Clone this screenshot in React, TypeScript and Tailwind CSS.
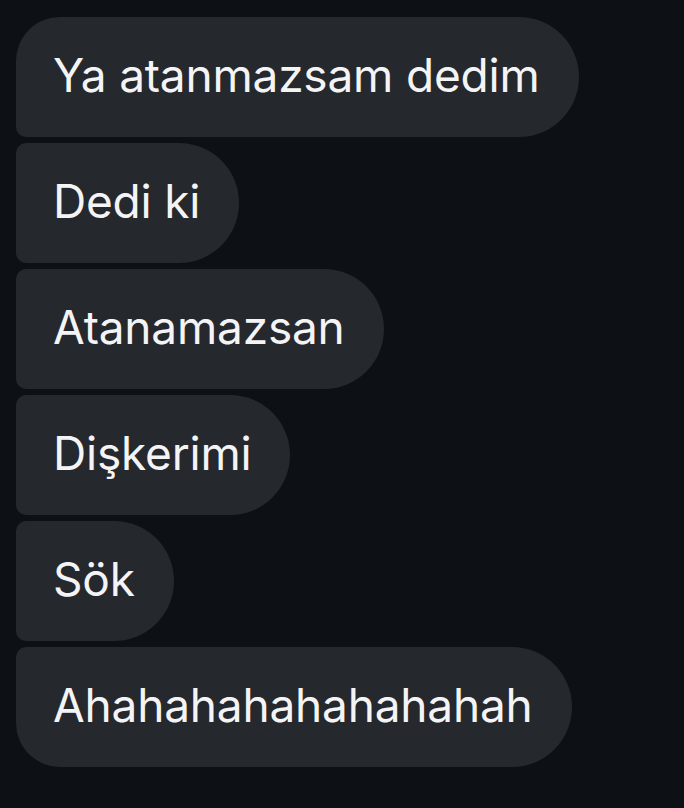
import React from "react";

const messages = [
  "Ya atanmazsam dedim",
  "Dedi ki",
  "Atanamazsan",
  "Dişkerimi",
  "Sök",
  "Ahahahahahahahahah",
];

function cornerClass(i: number, n: number) {
  if (i === 0) return "rounded-tl-[44px] rounded-bl-[10px]";
  if (i === n - 1) return "rounded-tl-[10px] rounded-bl-[44px]";
  return "rounded-l-[10px]";
}

export default function App() {
  return (
    <div className="w-[684px] h-[808px] bg-[#0d1014] overflow-hidden pt-[17px] pl-4">
      <div className="flex flex-col items-start gap-[6px]">
        {messages.map((m, i) => (
          <div
            key={i}
            className={`h-[120px] flex items-center pl-[37px] pr-[39px] bg-[#25282c] rounded-r-[60px] ${cornerClass(i, messages.length)}`}
          >
            <span
              className="text-[46px] leading-none text-[#f4f4f6] tracking-[-0.2px] pb-1"
              style={{ fontFamily: "Inter, 'Noto Sans', sans-serif" }}
            >
              {m}
            </span>
          </div>
        ))}
      </div>
    </div>
  );
}
